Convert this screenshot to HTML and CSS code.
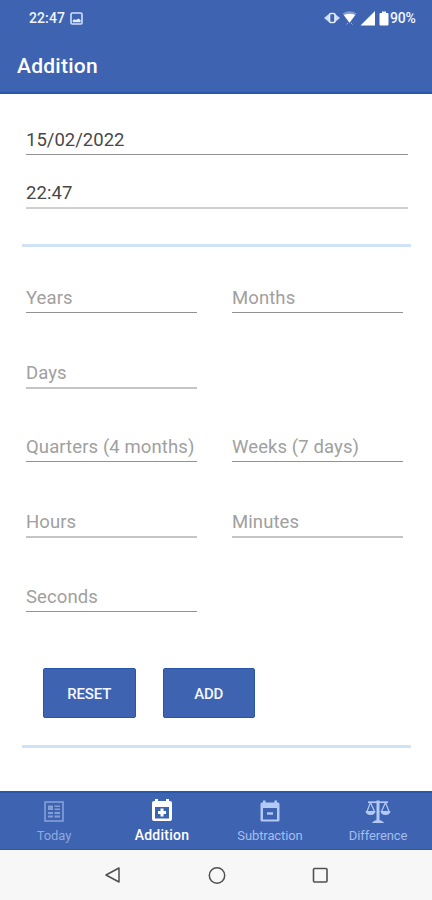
FILE: index.html
```html
<!DOCTYPE html>
<html lang="en">
<head>
<meta charset="utf-8">
<title>Addition</title>
<link rel="stylesheet" href="styles.css">
</head>
<body>
<div class="status">
  <span class="clock">22:47</span>
  <svg class="shot" width="13" height="13" viewBox="0 0 13 13"><rect x="1" y="1" width="11" height="11" rx="1.2" fill="none" stroke="#d3e0f8" stroke-width="1.6"/><path d="M2.800 10.200V8l1.700-.8 1.500.8L8.400 6.500l2.200 1.500v2.200z" fill="#e3ecfc"/></svg>
  <svg class="indicators" width="66" height="18" viewBox="0 0 66 18">
    <path d="M5 5L0 9l5 4zM11 5l5 4-5 4z" fill="#cfdcf6"/><rect x="5.500" y="4.500" width="5.500" height="9" rx="1.500" fill="#3e63b1" stroke="#e3ecfc" stroke-width="1.600"/>
    <path d="M18.500 4.500Q25.500 0 32.500 4.500L25.500 14z" fill="#7f9bd3"/><path d="M19.800 6Q25.500 3.500 31.200 6L25.500 13.800z" fill="#fff"/><path d="M22.500 15.500l1.500-1.500M28.500 15.500L27 14" stroke="#9db4e1"/>
    <path d="M36.500 16.500L51 2v14.500z" fill="#fff"/>
    <path d="M58 2.500h4v1.500h1.500q1 0 1 1v10.500q0 1-1 1h-7q-1 0-1-1V5q0-1 1-1H58z" fill="#fff"/>
  </svg>
  <span class="percent">90%</span>
</div>
<header class="title">Addition</header>
<main>
  <div class="field date">15/02/2022</div>
  <div class="field time">22:47</div>
  <div class="divider"></div>
  <div class="grid">
    <div class="field hint">Years</div><div class="field hint">Months</div>
    <div class="field hint soft first">Days</div>
    <div class="field hint first">Quarters (4 months)</div><div class="field hint">Weeks (7 days)</div>
    <div class="field hint soft">Hours</div><div class="field hint soft">Minutes</div>
    <div class="field hint first">Seconds</div>
  </div>
  <div class="actions"><button>RESET</button><button>ADD</button></div>
  <div class="divider"></div>
</main>
<nav class="tabs">
  <a class="tab">
    <svg width="22" height="24" viewBox="0 0 22 24"><rect x="2" y="3" width="18" height="19" fill="none" stroke="#90a9dd" stroke-width="1.400"/><path d="M5 6.500h5v4.500H5zM11.500 6.500H17V8h-5.500zM11.500 9.500H17V11h-5.500zM5 13h5v2H5zM5 16.500h5v2H5zM11.500 13H17v2h-5.500zM11.500 16.500H17v2h-5.500z" fill="#859fd6"/></svg>
    <span class="today">Today</span></a>
  <a class="tab active">
    <svg width="22" height="24" viewBox="0 0 22 24"><path fill="#fff" fill-rule="evenodd" d="M4 0h3v2h8V0h3v2h1q2 0 2 2v16q0 2-2 2H3q-2 0-2-2V4q0-2 2-2h1zM4 8v11.500h14V8z"/><path d="M11 9.500v8M7 13.500h8" stroke="#fff" stroke-width="3"/></svg>
    <span>Addition</span></a>
  <a class="tab">
    <svg width="22" height="24" viewBox="0 0 22 24"><path fill="#b4caf4" fill-rule="evenodd" d="M4 1.500h2.500v2h9v-2H18v2h1q1.500 0 1.500 1.500v16q0 1.500-1.500 1.500H3q-1.500 0-1.500-1.500V5Q1.500 3.500 3 3.500h1zM4 9v11.500h14V9z"/><path d="M8 14.500h6" stroke="#b4caf4" stroke-width="2.400"/></svg>
    <span>Subtraction</span></a>
  <a class="tab">
    <svg width="26" height="24" viewBox="0 0 26 24" fill="none" stroke="#b4caf4"><path d="M3 3.200h20" stroke-width="1.700"/><path d="M13 1.500v20" stroke-width="3"/><path d="M7.500 24q1-2.500 5.500-2.500t5.500 2.500z" fill="#b4caf4"/><path d="M5.500 3.500L2 12.500M5.500 3.500L9.500 12.500M20.500 3.500L16.500 12.500M20.500 3.500L24 12.500" stroke-width="1.200"/><path d="M.5 12h10q-.5 4-5 4t-5-4zM15.500 12h10q-.5 4-5 4t-5-4z" fill="#b4caf4" stroke="none"/></svg>
    <span>Difference</span></a>
</nav>
<div class="system">
  <svg width="18" height="20" viewBox="0 0 18 20"><path d="M16 3v14L3 10z" fill="none" stroke="#505050" stroke-width="1.500" stroke-linejoin="round"/></svg>
  <svg width="20" height="20" viewBox="0 0 20 20"><circle cx="11" cy="10.500" r="7.700" fill="none" stroke="#505050" stroke-width="1.500"/></svg>
  <svg width="18" height="20" viewBox="0 0 18 20"><rect x="2.500" y="3.500" width="13.500" height="13.500" rx="1" fill="none" stroke="#505050" stroke-width="1.600"/></svg>
</div>
</body>
</html>
```
FILE: styles.css
```css
* { box-sizing: border-box; }
body { margin: 0; width: 432px; height: 900px; overflow: hidden; display: flex; flex-direction: column; background: #fff; font-family: Roboto, "Liberation Sans", sans-serif; }
.status { height: 38px; flex: none; display: flex; align-items: center; padding: 0 16px 2px 29px; background: #3e63b1; color: #f1f5ff; font-size: 14px; font-weight: 500; }
.clock { width: 41px; letter-spacing: .1px; }
.indicators { margin-left: auto; }
.percent { width: 26px; letter-spacing: -.2px; }
.title { height: 56px; flex: none; padding: 0 17px; line-height: 56px; background: #3e63b1; border-bottom: 2px solid #2758a9; color: #fff; font-size: 21px; font-weight: 500; letter-spacing: .25px; }
main { height: 697px; flex: none; padding-top: 29px; }
.field { height: 32px; line-height: 35px; border-bottom: 1px solid #929292; color: #484848; font-size: 18.5px; letter-spacing: .1px; white-space: nowrap; }
.date { letter-spacing: 0; }
.date, .time { margin: 0 24px 0 26px; }
.time { height: 33px; margin-top: 21px; border-bottom: 2px solid #d0d0d0; line-height: 35px; }
.divider { height: 3px; margin: 35px 21px 0 22px; background: #cfe2f8; }
.grid { display: grid; grid-template-columns: 171px 171px; column-gap: 35px; grid-auto-rows: 74.700px; margin: 34px 0 0 26px; }
.hint { color: #a0a0a0; line-height: 35px; }
.soft { height: 33px; border-bottom: 2px solid #c5c5c5; }
.first { grid-column: 1; }
.actions { display: flex; gap: 27px; margin: 14px 0 0 43px; }
button { width: 92.500px; height: 50px; padding: 2px 0 0; border: 1px solid #2857a8; border-radius: 2px; background: #3e63b1; color: #f4f7ff; font: 500 15px Roboto, "Liberation Sans", sans-serif; letter-spacing: -.2px; }
.actions + .divider { margin-top: 27px; }
.tabs { height: 59px; flex: none; display: grid; grid-template-columns: repeat(4, 108px); background: #3e63b1; border-top: 2px solid #2758a9; border-bottom: 1px solid #2758a9; }
.tab { display: flex; flex-direction: column; align-items: center; padding-top: 6px; color: #a5bcec; font-size: 13px; line-height: 16px; letter-spacing: -.1px; }
.tab span { margin-top: 5px; }
.tab.active { color: #fff; font-size: 14px; font-weight: 500; letter-spacing: .25px; }
.tab.active span { margin-top: 4px; }
.tab .today { color: #90a9dd; }
.system { height: 50px; flex: none; display: flex; align-items: center; justify-content: space-between; padding: 0 103px; background: #f7f7f7; }
```
